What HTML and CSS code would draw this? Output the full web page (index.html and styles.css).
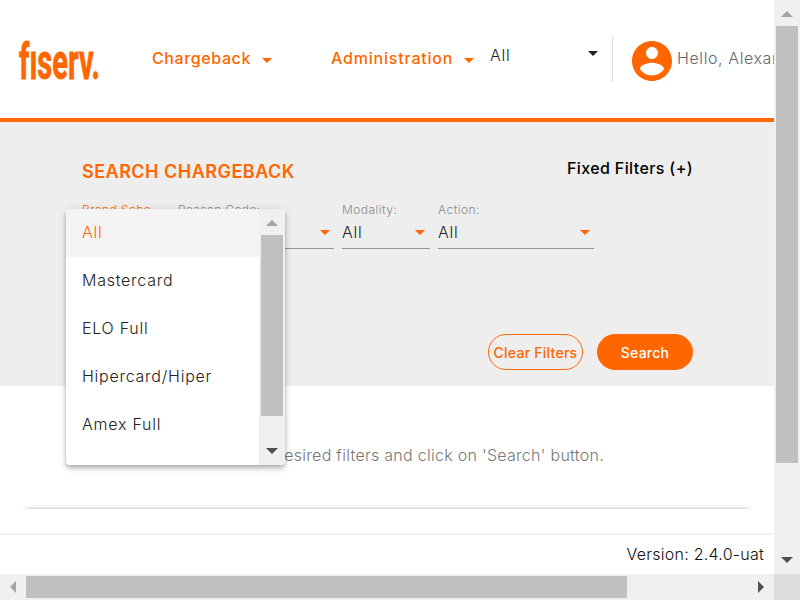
FILE: index.html
```html
<!DOCTYPE html>
<html lang="en">
<head>
<meta charset="utf-8">
<title>Search Chargeback</title>
<link rel="stylesheet" href="styles.css">
</head>
<body>
<div class="window">
  <div class="page">
    <header class="header">
      <svg class="logo" viewBox="0 0 82 44" role="img" aria-label="fiserv.">
        <text class="logo-text" x="1" y="40.5" textLength="81" lengthAdjust="spacingAndGlyphs">fıserv.</text>
      </svg>
      <nav class="nav">
        <a class="nav-item chargeback">Chargeback</a><i class="caret orange"></i>
        <a class="nav-item administration">Administration</a><i class="caret orange"></i>
      </nav>
      <div class="scope"><span class="all">All</span><i class="caret dark"></i></div>
      <div class="user">
        <svg class="avatar" viewBox="2 2 20 20"><path d="M12 2C6.48 2 2 6.48 2 12s4.48 10 10 10 10-4.48 10-10S17.52 2 12 2zm0 3c1.66 0 3 1.34 3 3s-1.34 3-3 3-3-1.34-3-3 1.34-3 3-3zm0 14.2c-2.5 0-4.71-1.28-6-3.22.03-1.99 4-3.08 6-3.08 1.99 0 5.97 1.09 6 3.08-1.29 1.94-3.5 3.22-6 3.22z"/></svg>
        <span class="hello">Hello, Alexandre</span>
      </div>
    </header>
    <section class="search">
      <div class="search-head">
        <h1 class="title">SEARCH CHARGEBACK</h1>
        <span class="fixed">Fixed Filters (+)</span>
      </div>
      <div class="filters">
        <div class="field brand active">
          <label class="label">Brand Sche</label>
          <div class="select"><span class="all">All</span><i class="caret orange"></i></div>
          <div class="menu">
            <ul class="options">
              <li class="option selected">All</li>
              <li class="option">Mastercard</li>
              <li class="option">ELO Full</li>
              <li class="option">Hipercard/Hiper</li>
              <li class="option">Amex Full</li>
            </ul>
            <div class="vbar"><i class="arrow up"></i><i class="thumb menu-thumb"></i><i class="arrow down"></i></div>
          </div>
        </div>
        <div class="field reason">
          <label class="label">Reason Code:</label>
          <div class="select"><span class="all">All</span><i class="caret orange"></i></div>
        </div>
        <div class="field modality">
          <label class="label">Modality:</label>
          <div class="select"><span class="all">All</span><i class="caret orange"></i></div>
        </div>
        <div class="field action">
          <label class="label">Action:</label>
          <div class="select"><span class="all">All</span><i class="caret orange"></i></div>
        </div>
      </div>
      <div class="buttons">
        <button class="btn clear">Clear Filters</button>
        <button class="btn go">Search</button>
      </div>
    </section>
    <main class="results">
      <p class="hint">Select the desired filters and click on 'Search' button.</p>
      <div class="edge"></div>
    </main>
    <footer class="footer"><span class="version">Version: 2.4.0-uat</span></footer>
  </div>
  <div class="vbar"><i class="arrow up"></i><i class="thumb page-thumb"></i><i class="arrow down"></i></div>
  <div class="hbar"><i class="arrow left"></i><i class="thumb side-thumb"></i><i class="arrow right"></i></div>
  <div class="corner"></div>
</div>
</body>
</html>
```
FILE: styles.css
```css
* { box-sizing: border-box; }
body {
  margin: 0;
  overflow: hidden;
  background: #fff;
  color: #222;
  font-family: Inter, "Open Sans", sans-serif;
  font-size: 16px;
  font-weight: 300;
  line-height: 20px;
}
.window {
  display: grid;
  grid-template: 574px 26px / 774px 26px;
  width: 800px;
  height: 600px;
}
.page { overflow: hidden; display: flex; flex-direction: column; }
.header {
  display: flex;
  flex: none;
  height: 122px;
  border-bottom: 4px solid #f60;
  white-space: nowrap;
}
.logo { flex: none; width: 82px; height: 44px; margin: 38px 0 0 18px; overflow: visible; }
.logo-text { fill: #f60; stroke: #f60; stroke-width: .8px; font: 700 50px Roboto, sans-serif; }
.nav { display: flex; align-items: flex-start; flex: none; width: 374px; margin-left: 52px; padding-top: 48px; color: #f60; font-weight: 500; }
.nav .caret { margin: 10px 0 0 12px; }
.chargeback { width: 98px; letter-spacing: .6px; }
.administration { width: 122px; margin-left: 59px; letter-spacing: .8px; }
.nav .caret:last-child { margin-left: 11px; }
.caret {
  flex: none;
  width: 10px;
  height: 5px;
  background: currentColor;
  clip-path: polygon(0 0, 100% 0, 50% 100%);
}
.orange { color: #f60; }
.dark { color: #222; }
.all { letter-spacing: .7px; }
.scope {
  display: flex;
  justify-content: space-between;
  flex: none;
  width: 123px;
  height: 46px;
  margin: 36px 0 0 -36px;
  padding: 9px 14px 0 0;
  border-right: 1px solid #dedede;
}
.scope .caret { margin-top: 6px; }
.user { display: flex; padding: 41px 0 0 19px; color: #666; }
.avatar { flex: none; width: 40px; height: 40px; fill: #f60; }
.hello { margin: 7px 0 0 5px; letter-spacing: .6px; }
.search {
  flex: none;
  height: 264px;
  padding: 36px 81px 0 82px;
  background: #eee;
}
.search-head { display: flex; justify-content: space-between; height: 44px; }
.title { margin: 3px 0 0; color: #f60; font-size: 18px; font-weight: 600; line-height: 21px; letter-spacing: .48px; white-space: nowrap; }
.fixed { color: #000; font-weight: 500; letter-spacing: .38px; white-space: nowrap; }
.filters { display: flex; gap: 8px; height: 132px; }
.field { position: relative; height: 47px; border-bottom: 1px solid #949494; }
.label { display: block; height: 16px; color: #8a8a8a; font-size: 12px; line-height: 16px; letter-spacing: .45px; white-space: nowrap; }
.reason .label { letter-spacing: .35px; }
.active .label { color: #f60; }
.select { display: flex; justify-content: space-between; padding: 4px 4px 0 0; }
.select .caret { margin-top: 8px; }
.brand { width: 88px; }
.reason { width: 156px; }
.modality { width: 88px; }
.modality .select { padding-right: 5px; }
.action { width: 156px; }
.menu {
  position: absolute;
  top: 7px;
  left: -16px;
  z-index: 2;
  display: flex;
  width: 219px;
  height: 256px;
  overflow: hidden;
  border-radius: 4px;
  background: #fff;
  box-shadow: 0 2px 4px -1px rgba(0,0,0,.2), 0 4px 5px rgba(0,0,0,.14), 0 1px 10px rgba(0,0,0,.12);
}
.options { flex: 1; margin: 0; padding: 0; list-style: none; }
.option { height: 48px; padding-left: 16px; line-height: 47px; letter-spacing: .75px; }
.selected { background: #f4f4f4; color: #f60; }
.buttons { display: flex; justify-content: flex-end; gap: 14px; }
.btn {
  height: 36px;
  padding: 0;
  border: 1px solid #f60;
  border-radius: 18px;
  background: transparent;
  color: #f60;
  font: 500 14px Inter, sans-serif;
  letter-spacing: .25px;
  white-space: nowrap;
}
.clear { width: 95px; }
.go { width: 96px; background: #f60; color: #fff; }
.results { flex: none; height: 149px; padding-top: 59px; background: #fff; }
.hint { margin: 0; padding-right: 170px; color: #777; text-align: right; letter-spacing: .28px; white-space: nowrap; }
.edge {
  height: 4px;
  margin: 40px 22px 0 22px;
  background: linear-gradient(#fff, #f3f3f3 50%, #d9d9d9 90%);
  -webkit-mask: linear-gradient(90deg, transparent, #000 8px, #000 calc(100% - 8px), transparent);
  mask: linear-gradient(90deg, transparent, #000 8px, #000 calc(100% - 8px), transparent);
}
.footer { flex: 1; padding: 9px 10px 0 0; box-shadow: 0 0 3px rgba(0,0,0,.2); text-align: right; }
.version { color: #111; letter-spacing: .25px; }
.vbar, .hbar { display: flex; align-items: center; justify-content: space-between; background: #f0f0f0; }
.vbar { flex-direction: column; flex: none; width: 26px; padding: 11px 0; }
.hbar { padding: 0 10px; }
.thumb { flex: none; background: #c0c0c0; }
.menu-thumb { width: 22px; height: 181px; margin: 9px 0 auto; }
.page-thumb { width: 22px; height: 437px; margin: 9px 0 auto; }
.side-thumb { width: 601px; height: 22px; margin: 0 auto 0 10px; }
.arrow { flex: none; background: #505050; }
.up { width: 12px; height: 6px; background: #a3a3a3; clip-path: polygon(50% 0, 100% 100%, 0 100%); }
.down { width: 12px; height: 6px; clip-path: polygon(0 0, 100% 0, 50% 100%); }
.left { width: 6px; height: 12px; background: #a3a3a3; clip-path: polygon(0 50%, 100% 0, 100% 100%); }
.right { width: 6px; height: 12px; clip-path: polygon(0 0, 100% 50%, 0 100%); }
.corner { background: #dcdcdc; }
```
